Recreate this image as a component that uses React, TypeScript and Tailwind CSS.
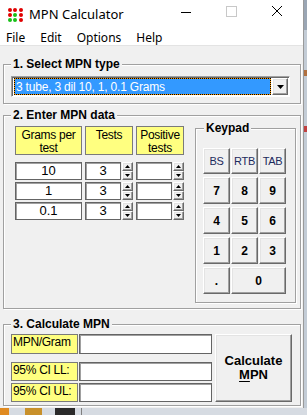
import React from "react";

const sans = "font-['Liberation_Sans',Arial,sans-serif]";
const ui = "font-['Noto_Sans','Liberation_Sans',sans-serif]";

const raised =
  "bg-[#f0f0f0] border border-t-white border-l-white border-r-[#696969] border-b-[#696969] shadow-[inset_-1px_-1px_0_#a0a0a0,inset_1px_1px_0_#e3e3e3]";
const box = "bg-white border border-[#646464] shadow-[inset_1px_1px_0_#a0a0a0]";
const yellow = "bg-[#ffff80] border border-[#7a7a7a]";
const group =
  "relative border border-[#a0a0a0] shadow-[inset_1px_1px_0_#ffffff,1px_1px_0_#ffffff]";

function Legend({ children, left = "left-[7px]" }: { children: React.ReactNode; left?: string }) {
  return (
    <span
      className={`absolute top-[-8px] ${left} bg-[#f0f0f0] px-[2px] text-[12px] leading-[14px] font-bold text-black ${sans}`}
    >
      {children}
    </span>
  );
}

function Tri({ up }: { up?: boolean }) {
  return (
    <svg width="5" height="3" viewBox="0 0 5 3" className="block">
      {up ? <path d="M2.5 0 L5 3 L0 3 Z" fill="#000" /> : <path d="M0 0 L5 0 L2.5 3 Z" fill="#000" />}
    </svg>
  );
}

function Spinner() {
  return (
    <div className="flex flex-col w-[11px] h-[18px] ml-[1px]">
      <div className={`${raised} h-[9px] flex items-center justify-center`}>
        <Tri up />
      </div>
      <div className={`${raised} h-[9px] flex items-center justify-center`}>
        <Tri />
      </div>
    </div>
  );
}

function Key({ label, small, wide }: { label: string; small?: boolean; wide?: boolean }) {
  return (
    <div
      className={`${raised} ${wide ? "col-span-2" : ""} flex items-center justify-center ${sans} ${
        small ? "text-[11px] text-[#1c2a5c] tracking-[-0.3px]" : "text-[12px] font-bold text-black"
      }`}
    >
      {label}
    </div>
  );
}

function IconDots() {
  const c = [
    ["#e00000", "#e00000", "#e00000"],
    ["#e00000", "#18c018", "#e00000"],
    ["#18c018", "#18c018", "#e00000"],
  ];
  return (
    <div className="grid grid-cols-3 gap-x-[1px] gap-y-[1px] w-[15px]">
      {c.flat().map((col, i) => (
        <span key={i} className="w-[4px] h-[4px] rounded-full" style={{ background: col }} />
      ))}
    </div>
  );
}

export default function App() {
  const rows = ["10", "1", "0.1"];
  return (
    <div className="w-[307px] h-[415px] bg-[#c9d0d8] flex flex-col overflow-hidden">
      <div className="flex h-[408px]">
        {/* window */}
        <div className="w-[304px] h-[408px] flex flex-col bg-white border-r border-[#9a9a9a]">
          {/* title bar */}
          <div className="h-[30px] flex items-center">
            <div className="ml-[8px] mr-[6px]">
              <IconDots />
            </div>
            <span className={`${ui} text-[13px] text-black`}>MPN Calculator</span>
            <div className="ml-auto flex items-center">
              <svg width="46" height="30" viewBox="0 0 46 30">
                <path d="M16 12.5 H26" stroke="#000" strokeWidth="1" />
              </svg>
              <svg width="46" height="30" viewBox="0 0 46 30">
                <rect x="15.5" y="6.5" width="10" height="10" fill="none" stroke="#c8c8c8" strokeWidth="1" />
              </svg>
              <svg width="46" height="30" viewBox="0 0 46 30">
                <path d="M15 6 L25 16 M25 6 L15 16" stroke="#000" strokeWidth="1" />
              </svg>
            </div>
          </div>
          {/* menu bar */}
          <div className={`h-[15px] flex items-center gap-[15px] pl-[6px] ${ui} text-[12px] leading-[15px] text-black`}>
            <span>File</span>
            <span>Edit</span>
            <span>Options</span>
            <span>Help</span>
          </div>
          {/* client */}
          <div className="flex-1 bg-[#f0f0f0] border-t border-[#e3e3e3] pl-[3px] flex flex-col">
            {/* group 1 */}
            <div className={`${group} mt-[18px] w-[298px] h-[40px] pt-[11px] pl-[7px]`}>
              <Legend>1. Select MPN type</Legend>
              <div className="w-[279px] h-[21px] flex border border-t-[#a0a0a0] border-l-[#a0a0a0] border-r-white border-b-white shadow-[inset_1px_1px_0_#696969] bg-white pl-[2px] pt-[1px] pb-[1px] pr-[1px]">
                <div className="flex-1 bg-[#ff9900] mr-[1px]">
                  <div
                    className={`h-full border border-dotted border-black bg-[#3399ff] bg-clip-padding flex items-center pl-[1px] ${sans} text-[12px] text-white tracking-[-0.2px]`}
                  >
                    3 tube, 3 dil 10, 1, 0.1 Grams
                  </div>
                </div>
                <div className={`${raised} w-[16px] flex items-center justify-center`}>
                  <svg width="7" height="4" viewBox="0 0 7 4">
                    <path d="M0 0 H7 L3.5 4 Z" fill="#000" />
                  </svg>
                </div>
              </div>
            </div>

            {/* group 2 */}
            <div className={`${group} mt-[11px] w-[298px] h-[194px] pt-[10px] pl-[11px] flex`}>
              <Legend>2. Enter MPN data</Legend>
              <div className="w-[170px] flex flex-col">
                <div className={`flex gap-[3px] h-[29px] ${sans} text-[12px] leading-[13px] text-black text-center tracking-[-0.3px]`}>
                  <div className={`${yellow} w-[67px] pt-[2px]`}>
                    Grams per
                    <br />
                    test
                  </div>
                  <div className={`${yellow} w-[48px] pt-[2px]`}>Tests</div>
                  <div className={`${yellow} w-[48px] pt-[2px]`}>
                    Positive
                    <br />
                    tests
                  </div>
                </div>
                <div className="flex flex-col gap-[2px] mt-[7px]">
                  {rows.map((r) => (
                    <div key={r} className={`flex h-[18px] ${sans} text-[13px] text-black`}>
                      <div className={`${box} w-[67px] flex items-center justify-center`}>{r}</div>
                      <div className={`${box} w-[36px] ml-[3px] flex items-center justify-center`}>3</div>
                      <Spinner />
                      <div className={`${box} w-[36px] ml-[3px]`} />
                      <Spinner />
                    </div>
                  ))}
                </div>
              </div>
              {/* keypad */}
              <div className={`${group} ml-[10px] mt-[2px] w-[101px] h-[175px] pt-[19px] pl-[7px]`}>
                <Legend left="left-[8px]">Keypad</Legend>
                <div className="grid grid-cols-[27px_27px_27px] grid-rows-[26px_27px_27px_27px_27px] gap-x-[1px] gap-y-[3px]">
                  <Key label="BS" small />
                  <Key label="RTB" small />
                  <Key label="TAB" small />
                  <Key label="7" />
                  <Key label="8" />
                  <Key label="9" />
                  <Key label="4" />
                  <Key label="5" />
                  <Key label="6" />
                  <Key label="1" />
                  <Key label="2" />
                  <Key label="3" />
                  <Key label="." />
                  <Key label="0" wide />
                </div>
              </div>
            </div>

            {/* group 3 */}
            <div className={`${group} mt-[15px] w-[298px] h-[82px] pt-[9px] pl-[7px] flex`}>
              <Legend>3. Calculate MPN</Legend>
              <div className={`flex flex-col w-[201px] ${sans} text-[12px] text-black tracking-[-0.3px]`}>
                <div className="flex h-[20px] gap-[1px]">
                  <div className={`${yellow} w-[67px] pl-[1px] leading-[14px]`}>MPN/Gram</div>
                  <div className={`${box} flex-1`} />
                </div>
                <div className="flex h-[19px] gap-[1px] mt-[8px]">
                  <div className={`${yellow} w-[67px] pl-[1px] leading-[14px]`}>95% CI LL:</div>
                  <div className={`${box} flex-1`} />
                </div>
                <div className="flex h-[19px] gap-[1px] mt-[2px]">
                  <div className={`${yellow} w-[67px] pl-[1px] leading-[14px]`}>95% CI UL:</div>
                  <div className={`${box} flex-1`} />
                </div>
              </div>
              <div
                className={`${raised} ml-[3px] w-[77px] h-[68px] flex flex-col items-center justify-center ${sans} text-[13px] font-bold leading-[14px] text-black`}
              >
                <span>Calculate</span>
                <span>
                  <span className="underline underline-offset-2">M</span>PN
                </span>
              </div>
            </div>
          </div>
        </div>
        {/* desktop right strip */}
        <div className="flex-1 flex flex-col bg-[#c3ccd6]">
          <div className="h-[30px] bg-[#9aa6b4]" />
          <div className="h-[40px]" />
          <div className="h-[6px] bg-[#b07040]" />
          <div className="h-[50px]" />
          <div className="h-[6px] bg-[#c04040]" />
        </div>
      </div>
      {/* desktop bottom strip */}
      <div className="h-[7px] flex bg-[#d6dbe2]">
        <div className="w-[9px] bg-[#e08a20]" />
        <div className="w-[16px]" />
        <div className="w-[17px] bg-[#c8902a]" />
        <div className="w-[13px]" />
        <div className="w-[20px] bg-[#2a2a2a]" />
        <div className="w-[6px]" />
        <div className="w-[1px] bg-[#808080]" />
      </div>
    </div>
  );
}
